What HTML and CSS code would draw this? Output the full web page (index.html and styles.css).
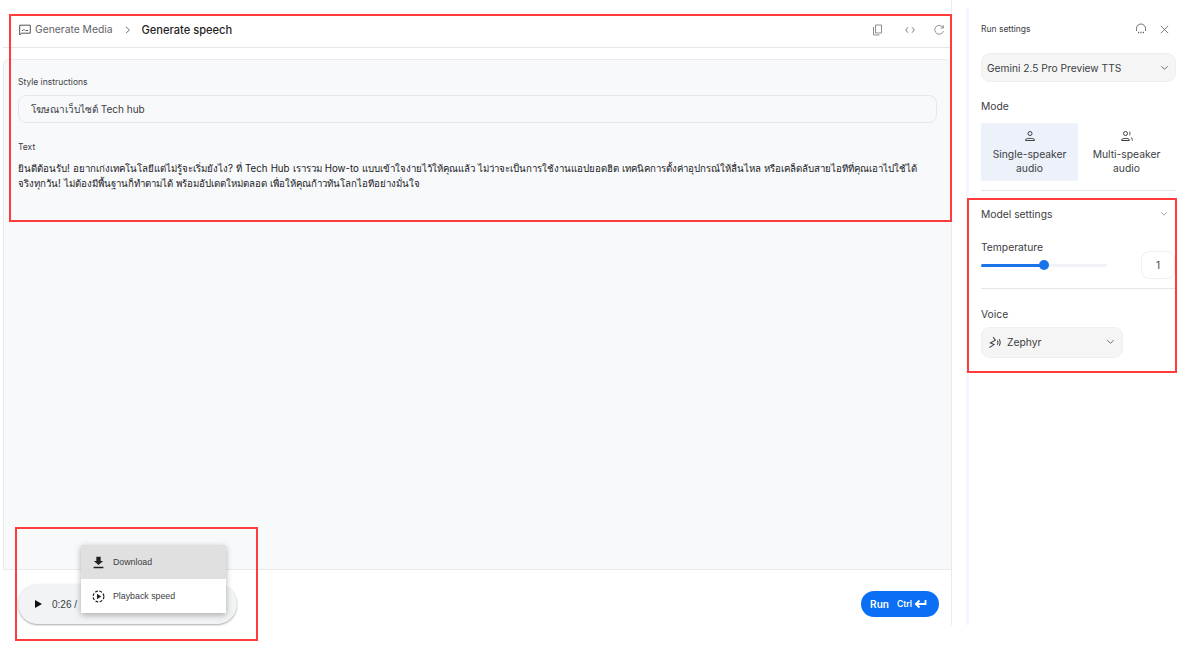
FILE: index.html
```html
<!DOCTYPE html>
<html lang="th">
<head>
<meta charset="utf-8">
<title>Generate speech</title>
<link rel="stylesheet" href="styles.css">
</head>
<body>
<div class="app">
  <main class="main">
    <header class="topbar">
      <svg class="crumb-icon" viewBox="0 0 12 12"><path d="M.7 11V1.200h10.600v8H2.400z" fill="none" stroke="#3c4043" stroke-width=".9"/><path d="M3 6.500h1M5 6.500V5M6.500 6.500h2.500" stroke="#3c4043" stroke-width=".9" fill="none"/></svg>
      <span class="crumb">Generate Media</span>
      <svg class="crumb-sep" viewBox="0 0 8 8"><path d="M2 .8 5.400 4 2 7.200" fill="none" stroke="#5f6368" stroke-width=".9"/></svg>
      <h1 class="title">Generate speech</h1>
      <div class="top-actions">
        <svg class="ti ti-copy" viewBox="0 0 12 12"><path d="M3.500 1h6v8h-6z M1.500 3v8h6" fill="none" stroke="#80868b" stroke-width=".9"/></svg>
        <svg class="ti" viewBox="0 0 12 12"><path d="M4 3.300 1.700 6 4 8.700M8 3.300 10.300 6 8 8.700" fill="none" stroke="#5f6368" stroke-width=".9"/></svg>
        <svg class="ti" viewBox="0 0 12 12"><path d="M10 3.600A4.400 4.400 0 1 0 10.400 7M10.300 1.200v2.800H7.500" fill="none" stroke="#80868b" stroke-width=".9"/></svg>
      </div>
    </header>
    <section class="workspace">
      <label class="field-label">Style instructions</label>
      <div class="style-input">โฆษณาเว็บไซต์ Tech hub</div>
      <label class="field-label text-label">Text</label>
      <p class="body-text">ยินดีต้อนรับ! อยากเก่งเทคโนโลยีแต่ไม่รู้จะเริ่มยังไง? ที่ Tech Hub เรารวม How-to แบบเข้าใจง่ายไว้ให้คุณแล้ว ไม่ว่าจะเป็นการใช้งานแอปยอดฮิต เทคนิคการตั้งค่าอุปกรณ์ให้ลื่นไหล หรือเคล็ดลับสายไอทีที่คุณเอาไปใช้ได้จริงทุกวัน! ไม่ต้องมีพื้นฐานก็ทำตามได้ พร้อมอัปเดตใหม่ตลอด เพื่อให้คุณก้าวทันโลกไอทีอย่างมั่นใจ</p>
    </section>
    <footer class="bottombar">
      <div class="player">
        <span class="play"></span>
        <span class="time">0:26 /</span>
      </div>
      <button class="run">Run <span class="ctrl">Ctrl</span><svg class="enter" viewBox="0 0 13 10"><path d="M11.500 1v4H2.500M5.500 1.500 1.800 5l3.700 3.500" fill="none" stroke="#fff" stroke-width="1.800"/></svg></button>
    </footer>
  </main>
  <div class="gutter"></div>
  <aside class="side">
    <div class="side-head">
      <span class="side-title">Run settings</span>
      <svg class="si si-wide" viewBox="0 0 12 12"><path d="M1.500 8V5.500a4.500 4.500 0 0 1 9 0V8" fill="none" stroke="#5f6368" stroke-width=".9"/><path d="M3 9.500h1.200M5.400 9.500h1.200M7.800 9.500H9" stroke="#5f6368" stroke-width="1.300"/></svg>
      <svg class="si" viewBox="0 0 12 12"><path d="m2 2 8 8M10 2l-8 8" stroke="#5f6368" stroke-width=".9"/></svg>
    </div>
    <div class="model-select"><span>Gemini 2.5 Pro Preview TTS</span><svg class="chev" viewBox="0 0 10 6"><path d="M1.500 1 5 4.500 8.500 1" fill="none" stroke="#5f6368"/></svg></div>
    <div class="mode-label">Mode</div>
    <div class="modes">
      <div class="mode mode-on">
        <svg class="mi" viewBox="0 0 12 12"><circle cx="6" cy="3.500" r="2" fill="none" stroke="#3c4043"/><path d="M1.500 10.500V9.500c1-1.500 8-1.500 9 0v1z" fill="none" stroke="#3c4043"/></svg>
        <span>Single-speaker audio</span>
      </div>
      <div class="mode">
        <svg class="mi" viewBox="0 0 12 12"><circle cx="4.500" cy="3.500" r="2" fill="none" stroke="#3c4043"/><path d="M.7 10.500V9.500c.8-1.500 6.800-1.500 7.600 0v1z" fill="none" stroke="#3c4043"/><path d="M8 1.700a2 2 0 0 1 0 3.600M10 7.500c1 .5 1.300 1.500 1.300 3" fill="none" stroke="#3c4043"/></svg>
        <span>Multi-speaker audio</span>
      </div>
    </div>
    <div class="rule rule-top"></div>
    <div class="settings-head"><span>Model settings</span><svg class="chev small" viewBox="0 0 10 6"><path d="M1.500 1 5 4.500 8.500 1" fill="none" stroke="#80868b"/></svg></div>
    <div class="temp-label">Temperature</div>
    <div class="temp-row">
      <div class="track"><div class="fill" style="width:50%"></div><div class="thumb" style="left:50%"></div></div>
      <div class="temp-value">1</div>
    </div>
    <div class="rule rule-mid"></div>
    <div class="voice-label">Voice</div>
    <div class="voice-select">
      <svg class="vi" viewBox="0 0 14 14"><path d="M5.500 1 8 4.500 2.500 7.500 6.500 9 1.500 12.500" fill="none" stroke="#3c4043" stroke-width="1.100"/><path d="M10 5c1 1.500 1 3 0 4.500M12 3.500c1.500 2.300 1.500 4.700 0 7" fill="none" stroke="#3c4043" stroke-width="1.100"/></svg>
      <span>Zephyr</span>
      <svg class="chev" viewBox="0 0 10 6"><path d="M1.500 1 5 4.500 8.500 1" fill="none" stroke="#5f6368"/></svg>
    </div>
  </aside>
</div>
<div class="menu">
  <div class="menu-item menu-hover">
    <svg class="menu-icon" viewBox="0 0 12 12"><path d="M4 .8h4v3.700h2.300L6 8.300 1.700 4.500H4zM1.500 10h9v1.200h-9z" fill="#202124"/></svg>
    <span>Download</span>
  </div>
  <div class="menu-item">
    <svg class="menu-icon" viewBox="0 0 14 14"><circle cx="7" cy="7" r="5.800" fill="none" stroke="#202124" stroke-width="1.300" stroke-dasharray="3 1.600"/><path d="M5.300 4 10 7l-4.700 3z" fill="#202124"/></svg>
    <span>Playback speed</span>
  </div>
</div>
<div class="mark mark-top"></div>
<div class="mark mark-side"></div>
<div class="mark mark-audio"></div>
</body>
</html>
```

FILE: styles.css
```css
* { box-sizing: border-box; }
html, body { margin: 0; height: 650px; overflow: hidden; background: #fff; }
body { font-family: Inter, "Noto Sans", "DejaVu Sans", sans-serif; color: #3c4043; position: relative; }
.app { display: flex; height: 625px; padding-left: 3px; }
.main { width: 949px; display: flex; flex-direction: column; border-right: 1px solid #e8eaed; }
.topbar { height: 33px; margin-top: 15px; display: flex; align-items: center; padding: 0 6px 3px 16px; border-bottom: 1px solid #e6e7ea; flex: none; }
.crumb-icon { width: 12px; height: 12px; margin-right: 4px; }
.crumb { font-size: 10.300px; color: #5f6368; margin-bottom: 1px; }
.crumb-sep { width: 8px; height: 8px; margin: 0 9px 0 12px; }
.title { font-size: 11.100px; font-weight: 500; color: #1f1f1f; margin: 0; }
.top-actions { margin-left: auto; display: flex; gap: 17px; }
.ti { width: 12px; height: 12px; }
.ti-copy { margin-right: 3px; }
.workspace { flex: 1; margin-top: 11px; background: #f8f9fb; border: 1px solid #e8eaed; border-right: 0; border-radius: 6px 6px 0 0; padding: 16px 14px 0 14px; }
.field-label { display: block; font-size: 8.500px; line-height: 12px; color: #3c4043; }
.style-input { margin-top: 7px; height: 28px; width: 919px; border: 1px solid #e6e7ea; border-radius: 8px; padding: 0 12px; font-size: 10px; line-height: 26px; color: #3c4043; }
.text-label { margin-top: 18px; }
.body-text { margin: 8px 0 0; width: 905px; font-size: 9.700px; word-spacing: .4px; line-height: 15px; color: #202124; }
.bottombar { height: 55px; flex: none; display: flex; justify-content: space-between; align-items: flex-start; padding: 0 12px 0 15px; }
.player { margin-top: 14px; width: 219px; height: 40px; border-radius: 20px; background: #f1f3f4; box-shadow: 0 1px 2px rgba(60,64,67,.45); display: flex; align-items: center; padding-left: 17px; gap: 10px; }
.play { width: 0; height: 0; border-left: 7px solid #111; border-top: 4px solid transparent; border-bottom: 4px solid transparent; }
.time { font: 10px "Liberation Sans", Arial, sans-serif; color: #3c4043; }
.run { margin-top: 21px; width: 78px; height: 26px; border: 0; border-radius: 13px; background: #0b6ff5; color: #fff; font: 600 10px Inter, sans-serif; display: flex; align-items: center; justify-content: center; padding: 0 3px 0 0; }
.ctrl { font-size: 8.500px; margin-left: 8px; }
.enter { width: 13px; height: 10px; margin-left: 2px; }
.gutter { flex: none; width: 3px; margin: 8px 0 0 14px; background: #f3f6fd; }
.side { flex: 1; padding: 0 14px 0 12px; min-width: 0; }
.side-head { display: flex; align-items: center; height: 14px; margin-top: 22px; padding-right: 6px; font-size: 8.500px; color: #3c4043; }
.side-title { margin-right: auto; }
.si { width: 11px; height: 11px; margin-left: 12px; }
.si-wide { width: 12px; height: 12px; }
.model-select { margin-top: 17px; height: 29px; width: 195px; background: #f5f5f5; border: 1px solid #eeeeee; border-radius: 9px; display: flex; align-items: center; justify-content: space-between; padding: 0 6px 0 5px; font-size: 10.200px; color: #3c4043; }
.chev { width: 9px; height: 6px; flex: none; }
.small { width: 8px; }
.mode-label { margin-top: 17px; font-size: 10.300px; line-height: 14px; }
.modes { display: flex; margin-top: 10px; }
.mode { width: 97px; height: 58px; display: flex; flex-direction: column; align-items: center; text-align: center; padding: 7px 8px 0; font-size: 10.300px; line-height: 14px; border-radius: 2px; }
.mode-on { background: #edf1fa; }
.mi { width: 12px; height: 12px; margin-bottom: 5px; flex: none; }
.rule { height: 1px; background: #e3e5e8; width: 195px; }
.rule-top { margin-top: 9px; }
.settings-head { margin-top: 16px; display: flex; justify-content: space-between; align-items: center; width: 187px; font-size: 10.300px; line-height: 14px; }
.temp-label { margin-top: 19px; font-size: 10.300px; line-height: 14px; }
.temp-row { display: flex; align-items: center; margin-top: -3px; }
.track { position: relative; width: 126px; height: 3px; background: #f1f3f8; border-radius: 2px; }
.fill { height: 3px; background: #1a73e8; border-radius: 2px; }
.thumb { position: absolute; top: -3.500px; width: 10px; height: 10px; margin-left: -5px; background: #1a73e8; border-radius: 50%; }
.temp-value { margin-left: 34px; width: 34px; height: 28px; border: 1px solid #eeeff1; border-radius: 8px; display: flex; align-items: center; justify-content: center; font-size: 10px; }
.rule-mid { margin-top: 9px; }
.voice-label { margin-top: 18px; font-size: 10.300px; line-height: 14px; }
.voice-select { margin-top: 6px; width: 142px; height: 31px; background: #f5f5f5; border: 1px solid #eeeeee; border-radius: 9px; display: flex; align-items: center; padding: 0 7px 1px 6px; font-size: 10.300px; }
.voice-select span { margin: 0 auto 0 6px; }
.vi { width: 13px; height: 13px; }
.menu { position: absolute; left: 81px; top: 545px; width: 145px; background: #fff; box-shadow: 0 2px 6px rgba(60,64,67,.4); }
.menu-item { height: 34px; display: flex; align-items: center; padding-left: 11px; font: 8.800px "Liberation Sans", Arial, sans-serif; color: #3c4043; }
.menu-hover { background: #e0e0e0; }
.menu-icon { width: 13px; height: 13px; margin-right: 8px; }
.mark { position: absolute; border: 2px solid #ff3b3b; pointer-events: none; }
.mark-top { left: 9px; top: 14px; width: 943px; height: 208px; }
.mark-side { left: 967px; top: 198px; width: 210px; height: 175px; }
.mark-audio { left: 15px; top: 527px; width: 243px; height: 114px; }
```
